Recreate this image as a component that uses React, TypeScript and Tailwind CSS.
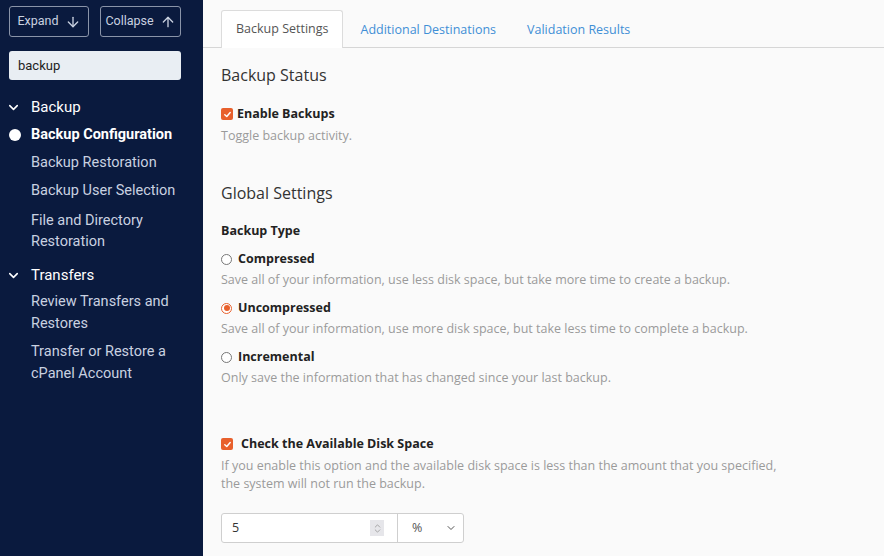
import { ArrowDown, ArrowUp, ChevronDown, ChevronsUpDown } from "lucide-react";

const navFont = { fontFamily: "Roboto, 'Liberation Sans', sans-serif" };
const bodyFont = { fontFamily: "'Open Sans', 'Liberation Sans', sans-serif" };

function Sidebar() {
  return (
    <aside className="w-[203px] shrink-0 bg-[#0a1a3e] text-[#c9d1e0] min-h-[556px]" style={navFont}>
      <div className="flex gap-[11px] px-[9px] pt-[6px]">
        <button className="flex h-[31px] w-[80px] items-center justify-center gap-[6px] rounded-[3px] border border-[#8a94a8] text-[12.5px] text-[#c9d1e0]">
          Expand <ArrowDown size={16} strokeWidth={2} />
        </button>
        <button className="flex h-[31px] w-[81px] items-center justify-center gap-[6px] rounded-[3px] border border-[#8a94a8] text-[12.5px] text-[#c9d1e0]">
          Collapse <ArrowUp size={16} strokeWidth={2} />
        </button>
      </div>
      <div className="mx-[9px] mt-[14px] flex h-[29px] w-[172px] items-center rounded-[3px] bg-[#e9eef3] px-[9px] text-[13px] text-[#222]">
        backup
      </div>
      <div className="mt-[16px] text-[14.5px]">
        <div className="flex h-[22px] items-center text-white text-[15px]">
          <ChevronDown size={15} strokeWidth={2.5} className="ml-[6px] mr-[10px]" />
          Backup
        </div>
        <div className="mt-[6px] flex h-[22px] items-center font-bold text-white">
          <span className="ml-[9px] mr-[10px] inline-block h-[12px] w-[12px] rounded-full bg-white" />
          Backup Configuration
        </div>
        <div className="ml-[31px] mt-[6px] leading-[22px]">Backup Restoration</div>
        <div className="ml-[31px] mt-[6px] leading-[22px]">Backup User Selection</div>
        <div className="ml-[31px] mt-[8px] leading-[21px]">
          File and Directory
          <br />
          Restoration
        </div>
        <div className="mt-[12px] flex h-[22px] items-center text-white text-[15px]">
          <ChevronDown size={15} strokeWidth={2.5} className="ml-[6px] mr-[10px]" />
          Transfers
        </div>
        <div className="ml-[31px] mt-[5px] leading-[22px]">
          Review Transfers and
          <br />
          Restores
        </div>
        <div className="ml-[31px] mt-[6px] leading-[22px]">
          Transfer or Restore a
          <br />
          cPanel Account
        </div>
      </div>
    </aside>
  );
}

function Radio({ checked, label, desc }: { checked?: boolean; label: string; desc: string }) {
  return (
    <div className="mt-[8px]">
      <div className="flex items-center gap-[6px] h-[20px]">
        {checked ? (
          <span className="flex h-[11px] w-[11px] items-center justify-center rounded-full border border-[#e8602c] bg-white">
            <span className="h-[6px] w-[6px] rounded-full bg-[#e8602c]" />
          </span>
        ) : (
          <span className="h-[11px] w-[11px] rounded-full border border-[#777] bg-white" />
        )}
        <span className="font-bold text-[#222]">{label}</span>
      </div>
      <div className="mt-[1px] text-[#9a9a9a] leading-[20px]">{desc}</div>
    </div>
  );
}

function Check() {
  return (
    <span className="flex h-[12px] w-[12px] items-center justify-center rounded-[2px] bg-[#e8602c]">
      <svg width="9" height="9" viewBox="0 0 10 10" fill="none">
        <path d="M2 5.2 L4.2 7.2 L8 2.8" stroke="white" strokeWidth="1.6" strokeLinecap="round" strokeLinejoin="round" />
      </svg>
    </span>
  );
}

export default function App() {
  return (
    <div className="flex h-[556px] w-[884px] overflow-hidden bg-[#fafafa]">
      <Sidebar />
      <main className="flex-1 text-[12.5px]" style={bodyFont}>
        <div className="flex items-end border-b border-[#d6d6d6] pl-[18px] pt-[10px] h-[48px]">
          <div className="-mb-px flex h-[38px] items-center rounded-t-[3px] border border-b-0 border-[#dcdcdc] bg-white pl-[14px] pr-[13px] text-[#555]">
            Backup Settings
          </div>
          <div className="flex h-[37px] items-center pt-[4px] pl-[18px] pr-[15px] text-[#3f8fd6]">Additional Destinations</div>
          <div className="flex h-[37px] items-center pt-[4px] pl-[16px] text-[#3f8fd6]">Validation Results</div>
        </div>
        <div className="px-[18px]">
          <h2 className="mt-[15px] text-[16px] text-[#333] leading-[24px]">Backup Status</h2>
          <div className="mt-[17px] flex h-[20px] items-center gap-[4px]">
            <Check />
            <span className="font-bold text-[#222]">Enable Backups</span>
          </div>
          <div className="mt-[2px] leading-[20px] text-[#9a9a9a]">Toggle backup activity.</div>

          <h2 className="mt-[35px] text-[16px] text-[#333] leading-[24px]">Global Settings</h2>
          <div className="mt-[16px] h-[20px] font-bold text-[#222] leading-[20px]">Backup Type</div>
          <Radio
            label="Compressed"
            desc="Save all of your information, use less disk space, but take more time to create a backup."
          />
          <Radio
            checked
            label="Uncompressed"
            desc="Save all of your information, use more disk space, but take less time to complete a backup."
          />
          <Radio label="Incremental" desc="Only save the information that has changed since your last backup." />

          <div className="mt-[46px] flex h-[20px] items-center gap-[8px]">
            <Check />
            <span className="font-bold text-[#222]">Check the Available Disk Space</span>
          </div>
          <div className="mt-[3px] leading-[18px] text-[#9a9a9a]">
            If you enable this option and the available disk space is less than the amount that you specified,
            <br />
            the system will not run the backup.
          </div>
          <div className="mt-[20px] flex h-[30px] w-[243px] rounded-[3px] border border-[#cfcfcf] bg-white">
            <div className="flex flex-1 items-center justify-between border-r border-[#cfcfcf] pl-[10px] pr-[13px] text-[#333]">
              5
              <span className="flex h-[16px] w-[14px] items-center justify-center bg-[#e6e6ea] text-[#888]">
                <ChevronsUpDown size={11} strokeWidth={1.5} />
              </span>
            </div>
            <div className="flex w-[65px] items-center justify-between pl-[14px] pr-[6px] text-[#555]">
              %
              <ChevronDown size={12} strokeWidth={2} className="text-[#555]" />
            </div>
          </div>
        </div>
      </main>
    </div>
  );
}
